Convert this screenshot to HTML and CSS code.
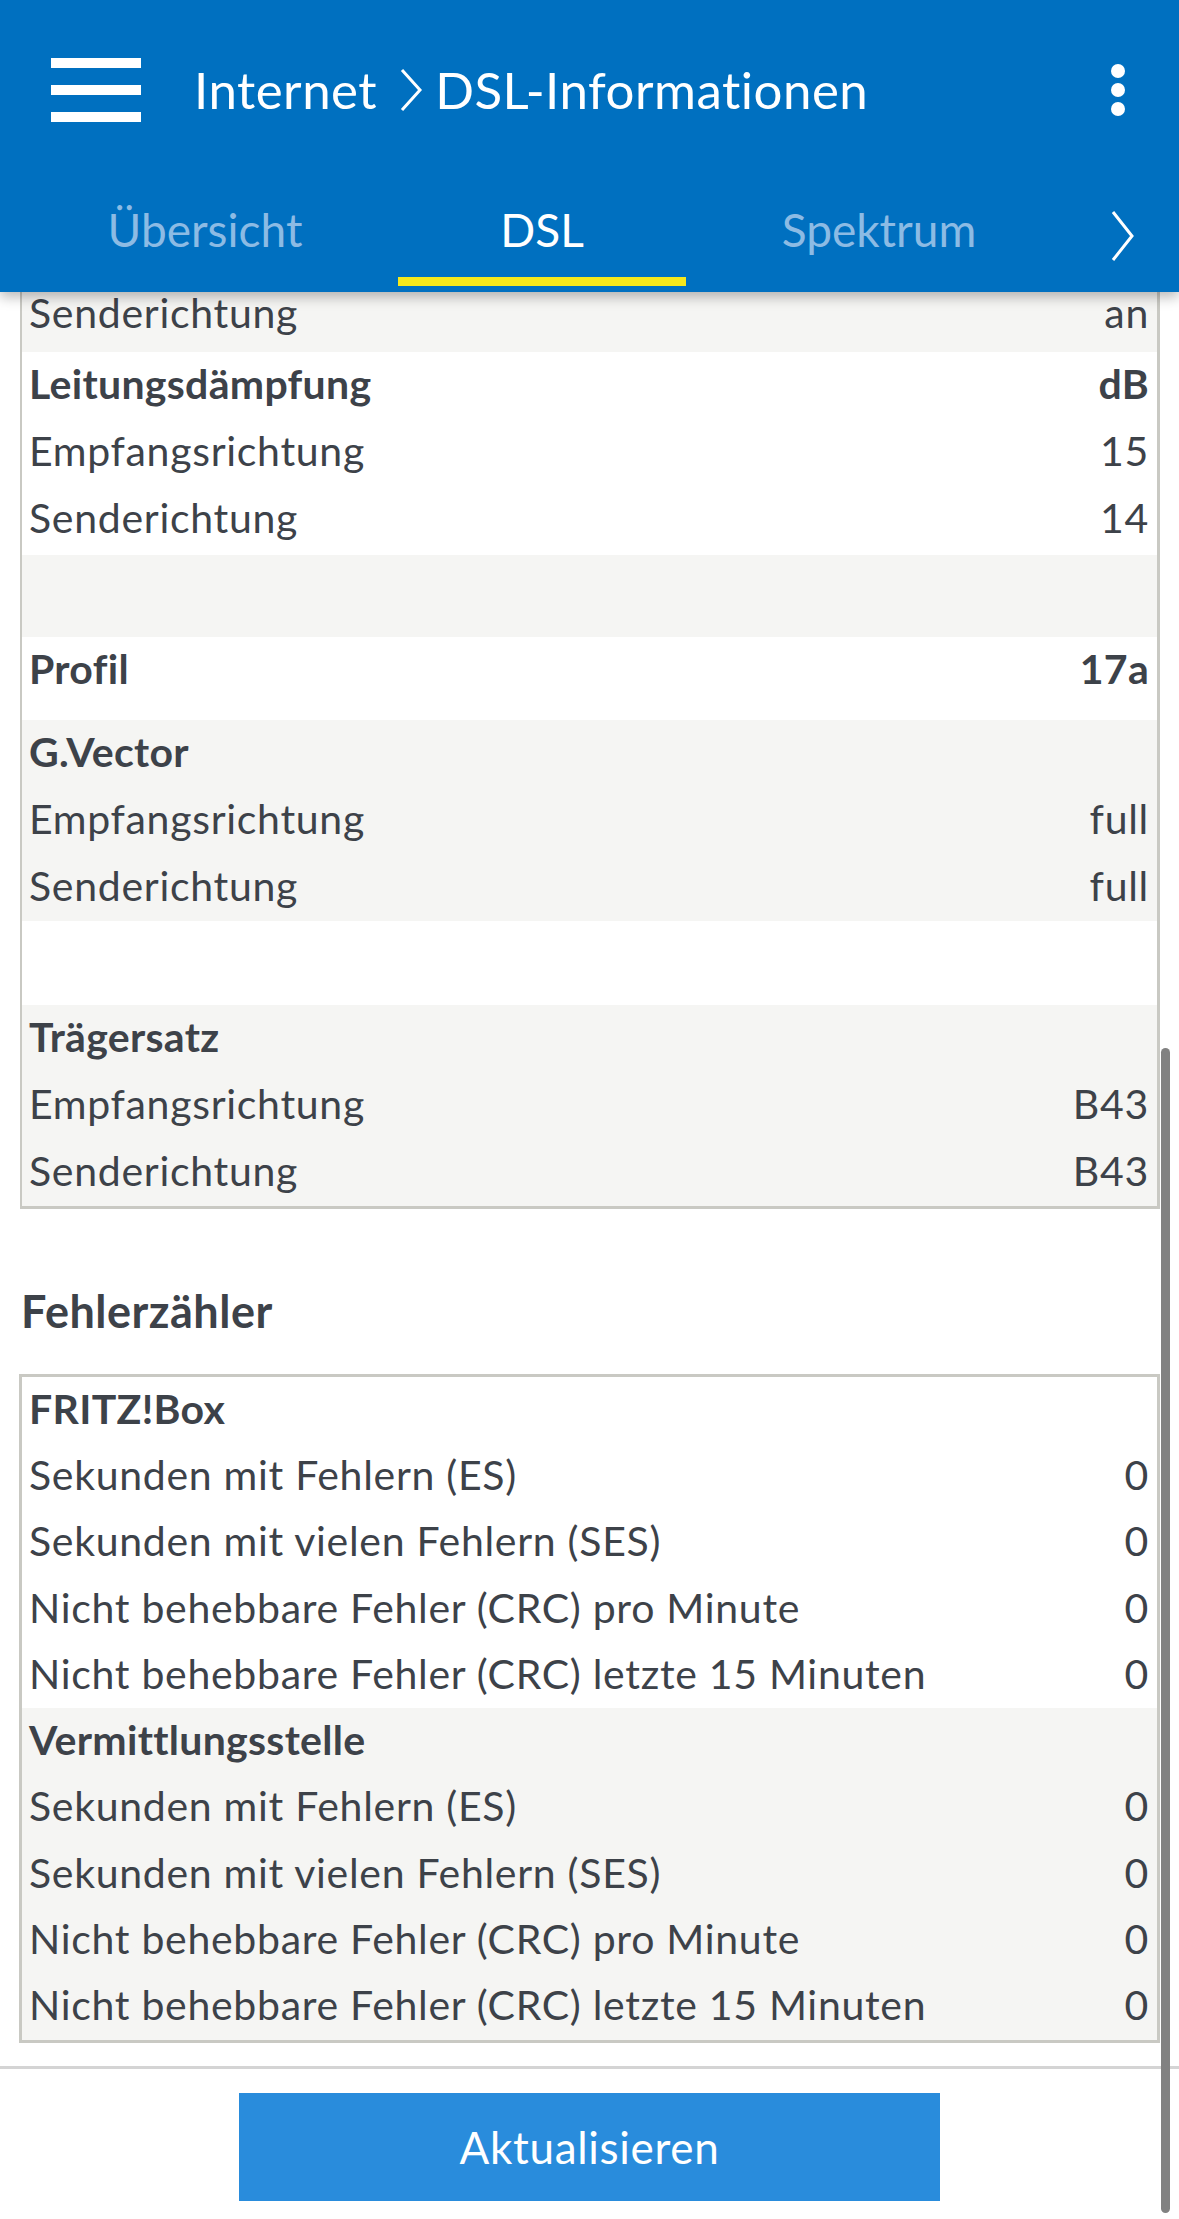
FILE: index.html
```html
<!DOCTYPE html>
<html lang="de">
<head>
<meta charset="utf-8">
<title>DSL-Informationen</title>
<link rel="stylesheet" href="styles.css">
</head>
<body>
<header class="appbar">
  <div class="toolbar">
    <div class="hamburger"><span></span><span></span><span></span></div>
    <h1 class="title">
      <span>Internet</span>
      <svg class="crumb" viewBox="0 0 24 42" width="24" height="42"><polyline points="3,1 21,21 3,41" fill="none" stroke="#fff" stroke-width="3"/></svg>
      <span>DSL-Informationen</span>
    </h1>
    <div class="overflow"><span></span><span></span><span></span></div>
  </div>
  <nav class="tabs">
    <div class="tab"><span class="tab-label">Übersicht</span><span class="tab-bar"></span></div>
    <div class="tab active"><span class="tab-label">DSL</span><span class="tab-bar"></span></div>
    <div class="tab"><span class="tab-label">Spektrum</span><span class="tab-bar"></span></div>
    <svg class="tab-next" viewBox="0 0 26 50" width="26" height="50"><polyline points="3,1 22,25 3,49" fill="none" stroke="#fff" stroke-width="3"/></svg>
  </nav>
</header>

<main class="content">
  <div class="table first">
    <div class="group alt tail">
      <div class="line"><span>Senderichtung</span><span>an</span></div>
    </div>
    <div class="group pad2">
      <div class="line head"><span>Leitungsdämpfung</span><span>dB</span></div>
      <div class="line"><span>Empfangsrichtung</span><span>15</span></div>
      <div class="line"><span>Senderichtung</span><span>14</span></div>
    </div>
    <div class="group alt blank b82"></div>
    <div class="group single">
      <div class="line head"><span>Profil</span><span>17a</span></div>
    </div>
    <div class="group alt">
      <div class="line head"><span>G.Vector</span><span></span></div>
      <div class="line"><span>Empfangsrichtung</span><span>full</span></div>
      <div class="line"><span>Senderichtung</span><span>full</span></div>
    </div>
    <div class="group blank b84"></div>
    <div class="group alt">
      <div class="line head"><span>Trägersatz</span><span></span></div>
      <div class="line"><span>Empfangsrichtung</span><span>B43</span></div>
      <div class="line"><span>Senderichtung</span><span>B43</span></div>
    </div>
  </div>

  <h2 class="section-title">Fehlerzähler</h2>

  <div class="table second">
    <div class="group">
      <div class="line head"><span>FRITZ!Box</span><span></span></div>
      <div class="line"><span>Sekunden mit Fehlern (ES)</span><span>0</span></div>
      <div class="line"><span>Sekunden mit vielen Fehlern (SES)</span><span>0</span></div>
      <div class="line"><span>Nicht behebbare Fehler (CRC) pro Minute</span><span>0</span></div>
      <div class="line"><span>Nicht behebbare Fehler (CRC) letzte 15 Minuten</span><span>0</span></div>
    </div>
    <div class="group alt">
      <div class="line head"><span>Vermittlungsstelle</span><span></span></div>
      <div class="line"><span>Sekunden mit Fehlern (ES)</span><span>0</span></div>
      <div class="line"><span>Sekunden mit vielen Fehlern (SES)</span><span>0</span></div>
      <div class="line"><span>Nicht behebbare Fehler (CRC) pro Minute</span><span>0</span></div>
      <div class="line"><span>Nicht behebbare Fehler (CRC) letzte 15 Minuten</span><span>0</span></div>
    </div>
  </div>

  <div class="footer">
    <button class="btn" type="button">Aktualisieren</button>
  </div>
</main>

<div class="scrollbar"></div>
</body>
</html>
```

FILE: styles.css
```css
html, body {
  margin: 0;
  padding: 0;
  height: 2219px;
  overflow: hidden;
  background: #ffffff;
}

body {
  font-family: "Lato", "Liberation Sans", sans-serif;
  color: #3d4249;
  position: relative;
}

/* ---------- App bar ---------- */
.appbar {
  position: relative;
  z-index: 2;
  background: #0070c0;
  box-shadow: 0 5px 12px rgba(0, 0, 0, 0.28);
}

.toolbar {
  height: 180px;
  display: flex;
  align-items: center;
  padding-left: 51px;
  padding-right: 54px;
}

.hamburger {
  width: 90px;
  display: flex;
  flex-direction: column;
  gap: 17px;
}
.hamburger span {
  display: block;
  height: 10px;
  background: #ffffff;
}

.title {
  margin: 0 0 0 53px;
  flex: 1;
  display: flex;
  align-items: center;
  color: #ffffff;
  font-weight: 400;
  font-size: 51px;
  letter-spacing: 0.5px;
  line-height: 60px;
  white-space: nowrap;
}
.crumb {
  margin: 0 12px 0 22px;
  flex: none;
}

.overflow {
  display: flex;
  flex-direction: column;
  gap: 5px;
}
.overflow span {
  display: block;
  width: 14px;
  height: 14px;
  border-radius: 50%;
  background: #ffffff;
}

.tabs {
  height: 112px;
  display: flex;
  padding-left: 61px;
  gap: 49px;
}
.tab {
  width: 288px;
  display: flex;
  flex-direction: column;
}
.tab-label {
  flex: 1;
  display: flex;
  align-items: center;
  justify-content: center;
  font-size: 46px;
  color: #8cbbe4;
  padding-top: 2px;
}
.tab-bar {
  height: 9px;
  margin-bottom: 6px;
}
.tab.active .tab-label {
  color: #ffffff;
}
.tab.active .tab-bar {
  background: #f5e81c;
}
.tab-next {
  margin-left: auto;
  margin-right: 43px;
  align-self: center;
}

/* ---------- Content ---------- */
.content {
  margin-top: -14px;
  position: relative;
  z-index: 1;
}

.table {
  margin: 0 19px 0 19px;
  border: 3px solid #c9c9c3;
}
.table.first {
  border-left-width: 2px;
  margin-left: 20px;
}

.group {
  background: #ffffff;
}
.group.alt {
  background: #f5f5f3;
}
.group.tail {
  padding-bottom: 4px;
}
.group.pad2 {
  padding-bottom: 2px;
}
.group.single {
  height: 83px;
}
.group.blank.b82 {
  height: 82px;
}
.group.blank.b84 {
  height: 84px;
}

.line {
  box-sizing: border-box;
  display: flex;
  justify-content: space-between;
  align-items: center;
  height: 67px;
  line-height: 50px;
  padding: 0 8px 3px 7px;
  font-size: 41px;
  letter-spacing: 0.7px;
  white-space: nowrap;
}
.second .line {
  height: 66.3px;
}
.line.head {
  font-weight: 700;
  letter-spacing: 0.3px;
}

.section-title {
  margin: 72px 0 33px 21px;
  font-size: 45px;
  letter-spacing: 0.5px;
  line-height: 60px;
  font-weight: 700;
  color: #3d4249;
}

.footer {
  margin-top: 23px;
  border-top: 3px solid #d4d4d4;
  padding-top: 24px;
  display: flex;
  justify-content: center;
}

.btn {
  width: 701px;
  height: 108px;
  border: none;
  border-radius: 0;
  background: #298cdc;
  color: #ffffff;
  font-family: "Lato", "Liberation Sans", sans-serif;
  font-size: 44px;
  letter-spacing: 0.7px;
  padding: 0;
}

.scrollbar {
  position: absolute;
  left: 1161px;
  top: 1048px;
  width: 9px;
  height: 1165px;
  border-radius: 5px;
  background: #818181;
  z-index: 3;
}
```
